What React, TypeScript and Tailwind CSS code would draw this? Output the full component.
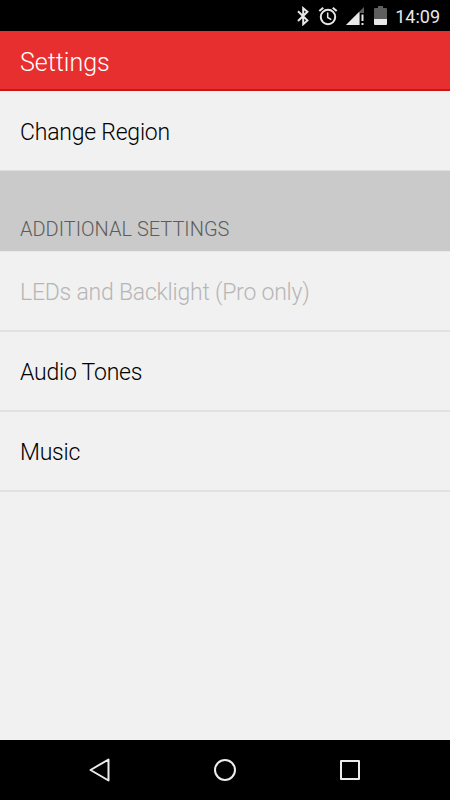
import * as React from 'react';
import { clsx } from 'clsx';

interface SettingsRowProps {
  label: string;
  disabled?: boolean;
}

function SettingsRow({ label, disabled = false }: SettingsRowProps) {
  return (
    <button
      disabled={disabled}
      className={clsx(
        'flex h-20 w-full items-center border-b-2 border-[#e1e1e1] px-5 pt-[3px] text-left text-[23px] leading-7 font-light tracking-[-0.22px]',
        disabled ? 'text-[#b6b6b6]' : 'text-black'
      )}
    >
      {label}
    </button>
  );
}

function BluetoothIcon() {
  return (
    <svg width="14" height="20" viewBox="0 0 14 20" fill="none" stroke="#e8e8e8" strokeWidth="2">
      <path d="M2 5.2l9.4 9.2L7.2 18.2V2.2l4.2 3.6L2 15" />
    </svg>
  );
}

function AlarmIcon() {
  return (
    <svg width="20" height="20" viewBox="0 0 20 20" fill="none" stroke="#e8e8e8" strokeWidth="2">
      <circle cx="10" cy="11" r="7.2" />
      <path d="M1.3 5.1l4-3.4M18.7 5.1l-4-3.4" />
      <path d="M9.7 6.5v5l3.6 2.2" strokeWidth="1.5" />
    </svg>
  );
}

function SignalIcon() {
  return (
    <svg width="18" height="18" viewBox="0 0 18 18">
      <path d="M18 0v6h-4v12H0z" fill="#5e5e5e" />
      <path d="M13.3 4.7V18H0z" fill="#e8e8e8" />
      <path d="M15.5 7.5h2v6.5h-2zM15.5 16h2v2h-2z" fill="#e8e8e8" />
    </svg>
  );
}

function BatteryIcon() {
  return (
    <svg width="13" height="19" viewBox="0 0 13 19">
      <path d="M4 0h5v2h3q1 0 1 1v10H0V3q0-1 1-1h3z" fill="#5e5e5e" />
      <path d="M0 13h13v5q0 1-1 1H1q-1 0-1-1z" fill="#e8e8e8" />
    </svg>
  );
}

function StatusBar() {
  return (
    <div className="flex h-[31px] shrink-0 items-center justify-end bg-black pr-[10px]">
      <div className="mr-2">
        <BluetoothIcon />
      </div>
      <div className="mr-2">
        <AlarmIcon />
      </div>
      <div className="mr-[10px]">
        <SignalIcon />
      </div>
      <div className="mr-2">
        <BatteryIcon />
      </div>
      <span className="pt-[2px] text-[18px] leading-5 font-normal text-[#e8e8e8]">14:09</span>
    </div>
  );
}

function NavigationBar() {
  return (
    <nav className="flex h-[60px] shrink-0 items-center justify-center gap-[101px] bg-black">
      <button aria-label="Back">
        <svg width="24" height="24" viewBox="0 0 24 24" fill="none" stroke="#ececec" strokeWidth="2" strokeLinejoin="round">
          <path d="M20.5 1.5v21L2.5 12z" />
        </svg>
      </button>
      <button aria-label="Home">
        <svg width="24" height="24" viewBox="0 0 24 24" fill="none" stroke="#ececec" strokeWidth="2">
          <circle cx="12" cy="12" r="10" />
        </svg>
      </button>
      <button aria-label="Recent apps">
        <svg width="24" height="24" viewBox="0 0 24 24" fill="none" stroke="#ececec" strokeWidth="2" strokeLinejoin="round">
          <path d="M3 3h18v18H3z" />
        </svg>
      </button>
    </nav>
  );
}

export default function App() {
  return (
    <div className="flex h-screen w-full flex-col overflow-hidden bg-[#f1f1f1] font-['Roboto',sans-serif]">
      <StatusBar />
      <header className="flex h-[60px] shrink-0 items-center border-b-2 border-[#cb1517] bg-[#e82f2f] px-5 pt-[5px]">
        <h1 className="text-[25px] leading-8 font-light text-white">Settings</h1>
      </header>
      <main className="flex-1">
        <button className="flex h-20 w-full items-center border-b border-[#dedede] px-5 pt-[4px] text-left text-[23px] leading-7 font-light tracking-[-0.22px] text-black">
          Change Region
        </button>
        <h2 className="flex h-[81px] items-end border-b border-[#e9e9e9] bg-[#cacaca] px-5 pb-[10px] text-[20px] leading-6 font-light text-[#5c5c5c]">
          ADDITIONAL SETTINGS
        </h2>
        <SettingsRow label="LEDs and Backlight (Pro only)" disabled />
        <SettingsRow label="Audio Tones" />
        <SettingsRow label="Music" />
      </main>
      <NavigationBar />
    </div>
  );
}
